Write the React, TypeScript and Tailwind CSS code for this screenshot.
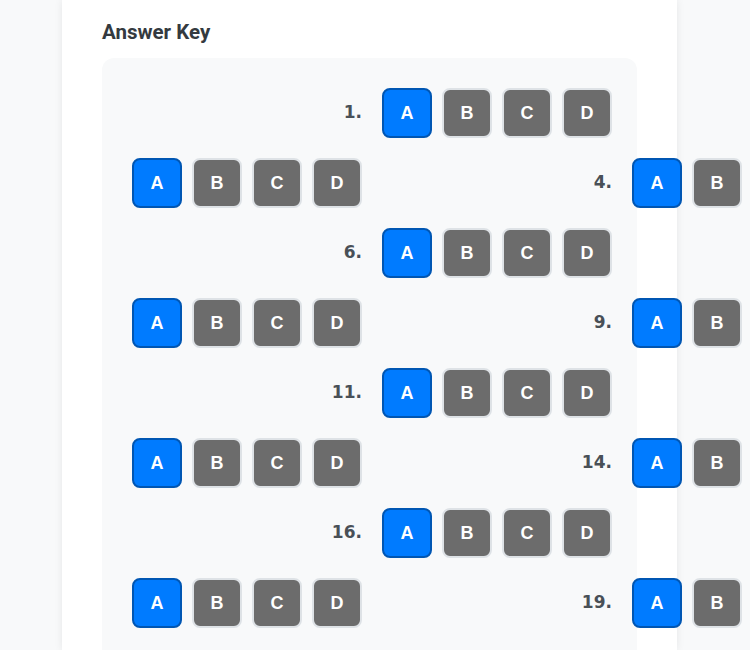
import React from "react";

const OPTIONS = ["A", "B", "C", "D"];

type Question = { id: number; answer: string };

const questions: Question[] = Array.from({ length: 20 }, (_, i) => ({
  id: i + 1,
  answer: "A",
}));

function OptionButton({ label, active }: { label: string; active: boolean }) {
  return (
    <button
      className={
        active
          ? "w-[50px] h-[50px] rounded-lg border-2 border-[#0056b3] bg-[#007bff] text-white text-[18px] font-bold font-['Liberation_Sans',Arial,sans-serif] flex items-center justify-center"
          : "w-[50px] h-[50px] rounded-lg border-2 border-[#dee2e6] bg-[#6c6c6c] text-white text-[18px] font-bold font-['Liberation_Sans',Arial,sans-serif] flex items-center justify-center"
      }
    >
      {label}
    </button>
  );
}

export default function App() {
  return (
    <div className="w-[750px] h-[650px] overflow-hidden bg-[#f8f9fa]">
      <div className="ml-[62px] w-[615px] h-full bg-white shadow-[0_0_8px_rgba(0,0,0,0.08)] px-10 pt-[20px]">
        <h2 className="text-[20.5px] leading-6 font-bold text-[#343a40] font-['Roboto',sans-serif] mb-[14px]">
          Answer Key
        </h2>
        <div className="bg-[#f8f9fa] rounded-xl p-[30px] h-[700px]">
          {/* five columns, label and buttons each take a cell */}
          <div className="grid grid-cols-[repeat(5,230px)] gap-5">
            {questions.map((q) => (
              <React.Fragment key={q.id}>
                <div className="h-[50px] flex items-center justify-end text-[17px] font-bold text-[#495057] font-['DejaVu_Sans',sans-serif]">
                  {q.id}.
                </div>
                <div className="flex gap-[10px]">
                  {OPTIONS.map((o) => (
                    <OptionButton key={o} label={o} active={o === q.answer} />
                  ))}
                </div>
              </React.Fragment>
            ))}
          </div>
        </div>
      </div>
    </div>
  );
}
